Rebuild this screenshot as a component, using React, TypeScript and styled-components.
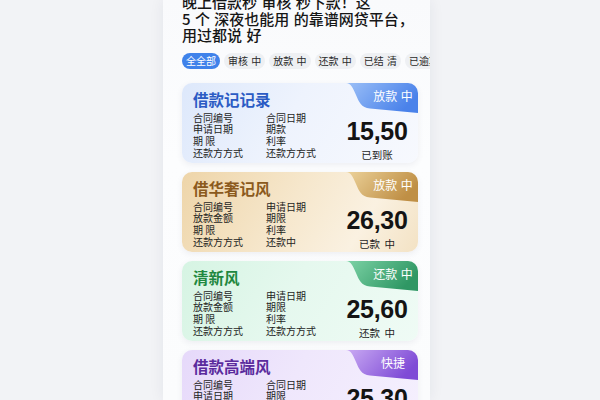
import React from 'react';
import styled, { createGlobalStyle } from 'styled-components';

interface Palette {
  bg: string;
  title: string;
  badgeFrom: string;
  badgeTo: string;
}

const palettes: { [k: string]: Palette } = {
  blue: {
    bg: 'linear-gradient(120deg, #dde8fb 0%, #eef3fd 45%, #f7f9fe 100%)',
    title: '#2b5bc4',
    badgeFrom: '#9cc0f7',
    badgeTo: '#4a82ea',
  },
  gold: {
    bg: 'linear-gradient(120deg, #eed5a9 0%, #f6e7cc 45%, #faf1e1 75%, #f3e2c4 100%)',
    title: '#8b5a1d',
    badgeFrom: '#ecd29a',
    badgeTo: '#bf8f45',
  },
  green: {
    bg: 'linear-gradient(120deg, #d6f4e3 0%, #e5f8ee 45%, #effbf5 100%)',
    title: '#1f8840',
    badgeFrom: '#7dd3a6',
    badgeTo: '#2f9764',
  },
  purple: {
    bg: 'linear-gradient(120deg, #e6d9fa 0%, #efe7fc 45%, #f5f0fe 100%)',
    title: '#5a2b9d',
    badgeFrom: '#c9aaf3',
    badgeTo: '#7f4bd6',
  },
};

interface Record {
  title: string;
  palette: string;
  badge: string;
  left: string[];
  right: string[];
  amount: string;
  status: string;
}

const records: Record[] = [
  {
    title: '借款记记录',
    palette: 'blue',
    badge: '放款 中',
    left: ['合同编号', '申请日期', '期 限', '还款方方式'],
    right: ['合同日期', '期款', '利率', '还款方方式'],
    amount: '15,50',
    status: '已到账',
  },
  {
    title: '借华奢记风',
    palette: 'gold',
    badge: '放款 中',
    left: ['合同编号', '放款金额', '期 限', '还款方方式'],
    right: ['申请日期', '期限', '利率', '还款中'],
    amount: '26,30',
    status: '已款 中',
  },
  {
    title: '清新风',
    palette: 'green',
    badge: '还款 中',
    left: ['合同编号', '放款金额', '期 限', '还款方方式'],
    right: ['申请日期', '期限', '利率', '还款方方式'],
    amount: '25,60',
    status: '还款 中',
  },
  {
    title: '借款高端风',
    palette: 'purple',
    badge: '快捷',
    left: ['合同编号', '申请日期', '期 限', '还款方方式'],
    right: ['合同日期', '期限', '利率', '还款方方式'],
    amount: '25,30',
    status: '已到账',
  },
];

const tabs = ['全全部', '审核 中', '放款 中', '还款 中', '已结 清', '已逾期'];

const GlobalStyle = createGlobalStyle`
  html, body {
    margin: 0;
    padding: 0;
    background: #f2f3f6;
  }
  body {
    font-family: "Noto Sans CJK SC", "Noto Sans", sans-serif;
  }
`;

const Page = styled.div`
  height: 400px;
  display: flex;
  padding-left: 163px;
  overflow: hidden;
`;

const Phone = styled.div`
  width: 236px;
  height: 400px;
  padding: 0 12px 0 19px;
  background: linear-gradient(180deg, #f9fafc 0%, #fcfdfe 40%, #fbfcfd 100%);
  box-shadow: 0 0 14px rgba(30, 40, 70, 0.07);
  overflow: hidden;
`;

const Heading = styled.h1`
  margin: -6px 0 0;
  font-size: 15px;
  line-height: 16.6px;
  font-weight: 500;
  word-spacing: 1px;
  color: #161616;
  white-space: pre;
`;

const TabRow = styled.div`
  display: flex;
  gap: 4px;
  margin-top: 9px;
  margin-right: -12px;
  white-space: nowrap;
`;

const Tab = styled.div<{ $active?: boolean }>`
  flex: none;
  height: 16px;
  line-height: 16px;
  padding: 0 4px;
  border-radius: 8px;
  font-size: 10px;
  word-spacing: 1px;
  color: ${({ $active }) => ($active ? '#ffffff' : '#2a2a2a')};
  background: ${({ $active }) => ($active ? '#3f82ea' : '#eef0f3')};
`;

const CardList = styled.div`
  display: flex;
  flex-direction: column;
  gap: 9px;
  margin-top: 14px;
`;

const Card = styled.div<{ $bg: string }>`
  position: relative;
  height: 80px;
  box-sizing: border-box;
  padding: 6px 2px 0 11px;
  display: flex;
  border-radius: 10px;
  background: ${({ $bg }) => $bg};
  box-shadow: 0 2px 6px rgba(60, 70, 100, 0.08);
  overflow: hidden;
`;

const Info = styled.div`
  flex: 1;
`;

const Title = styled.div<{ $color: string }>`
  font-size: 15.5px;
  line-height: 20px;
  font-weight: 600;
  color: ${({ $color }) => $color};
`;

const Fields = styled.div`
  display: grid;
  grid-template-columns: 73px auto;
  margin-top: 3px;
`;

const Field = styled.div`
  font-size: 10px;
  line-height: 11.7px;
  color: #1e1e1e;
  white-space: pre;
`;

const Summary = styled.div`
  width: 78px;
  margin-top: 28px;
  display: flex;
  flex-direction: column;
  align-items: center;
`;

const Amount = styled.div`
  font-family: "Liberation Sans", Arial, sans-serif;
  font-size: 25px;
  line-height: 28px;
  font-weight: 700;
  color: #141414;
  letter-spacing: -0.3px;
`;

const Status = styled.div`
  margin-top: 3px;
  font-size: 10.5px;
  line-height: 14px;
  word-spacing: 2px;
  color: #1e1e1e;
`;

const Badge = styled.div`
  position: absolute;
  top: 0;
  right: 0;
  width: 72px;
  height: 30px;
`;

const BadgeShape = styled.svg`
  display: block;
  width: 72px;
  height: 30px;
`;

const BadgeText = styled.span`
  position: absolute;
  top: 5px;
  left: 22px;
  right: 0;
  text-align: center;
  font-size: 12px;
  line-height: 16px;
  word-spacing: 1px;
  color: #ffffff;
`;

const RecordCard: React.FC<{ record: Record; index: number }> = ({ record, index }) => {
  const p = palettes[record.palette];
  const gid = `badge-grad-${index}`;
  return (
    <Card $bg={p.bg}>
      <Info>
        <Title $color={p.title}>{record.title}</Title>
        <Fields>
          {record.left.map((l, i) => (
            <React.Fragment key={i}>
              <Field>{l}</Field>
              <Field>{record.right[i]}</Field>
            </React.Fragment>
          ))}
        </Fields>
      </Info>
      <Summary>
        <Amount>{record.amount}</Amount>
        <Status>{record.status}</Status>
      </Summary>
      <Badge>
        <BadgeShape viewBox="0 0 72 30" preserveAspectRatio="none">
          <defs>
            <linearGradient id={gid} x1="0" y1="0" x2="1" y2="0.4">
              <stop offset="0" stopColor={p.badgeFrom} />
              <stop offset="1" stopColor={p.badgeTo} />
            </linearGradient>
          </defs>
          <path
            d="M0 0 H72 V30 L24 25.5 C15 24.5 13 19 10 12 C7 5 5 0 0 0 Z"
            fill={`url(#${gid})`}
          />
        </BadgeShape>
        <BadgeText>{record.badge}</BadgeText>
      </Badge>
    </Card>
  );
};

const App: React.FC = () => (
  <>
    <GlobalStyle />
    <Page>
      <Phone>
        <Heading>{'晚上借款秒 审核 秒下款！这\n5 个 深夜也能用 的靠谱网贷平台，\n用过都说 好'}</Heading>
        <TabRow>
          {tabs.map((t, i) => (
            <Tab key={t} $active={i === 0}>{t}</Tab>
          ))}
        </TabRow>
        <CardList>
          {records.map((r, i) => (
            <RecordCard key={r.title} record={r} index={i} />
          ))}
        </CardList>
      </Phone>
    </Page>
  </>
);

export default App;
